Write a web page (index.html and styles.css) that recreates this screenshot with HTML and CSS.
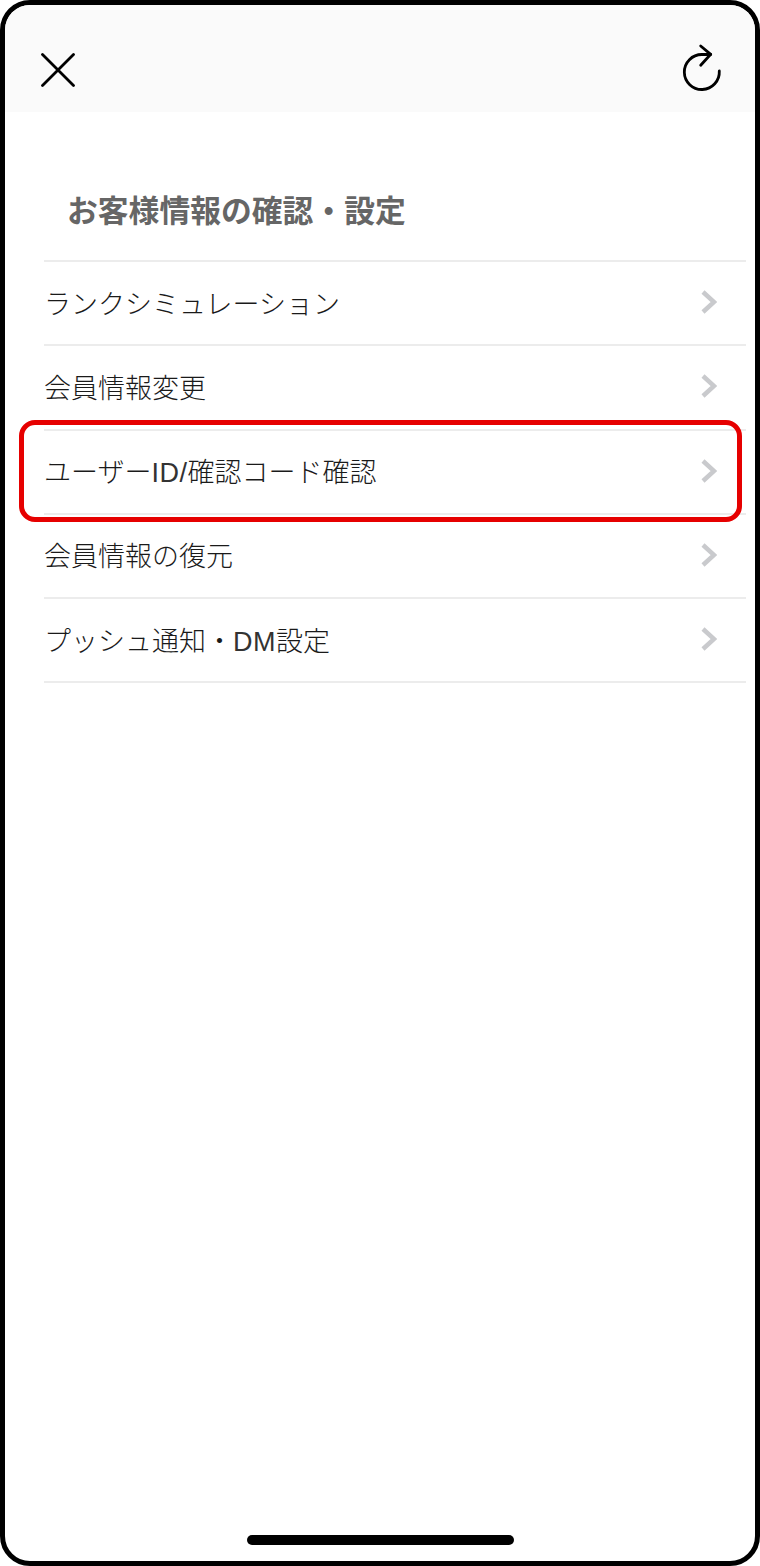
FILE: index.html
```html
<!DOCTYPE html>
<html lang="ja">
<head>
<meta charset="utf-8">
<title>お客様情報の確認・設定</title>
<link rel="stylesheet" href="styles.css">
</head>
<body>
<div class="phone">
  <header class="topbar">
    <svg class="icon-close" viewBox="0 0 34 34" width="34" height="34"><path d="M1.5 1.5 32.5 32.5M32.5 1.5 1.5 32.5"/></svg>
    <svg class="icon-reload" viewBox="0 0 40 50" width="40" height="50"><path d="M28.7 10.5H20A17.5 17.5 0 1 0 37.3 27"/><path d="M18.7 2 28.7 10.3 18.7 21.3"/></svg>
  </header>
  <main class="content">
    <h1 class="title">お客様情報の確認・設定</h1>
    <ul class="menu">
      <li class="row"><span>ランクシミュレーション</span><svg class="chev" viewBox="0 0 16 24" width="16" height="24"><path d="M2 2 13 12 2 22"/></svg></li>
      <li class="row"><span>会員情報変更</span><svg class="chev" viewBox="0 0 16 24" width="16" height="24"><path d="M2 2 13 12 2 22"/></svg></li>
      <li class="row"><span>ユーザー<span class="latin">ID/</span>確認コード確認</span><svg class="chev" viewBox="0 0 16 24" width="16" height="24"><path d="M2 2 13 12 2 22"/></svg></li>
      <li class="row"><span>会員情報の復元</span><svg class="chev" viewBox="0 0 16 24" width="16" height="24"><path d="M2 2 13 12 2 22"/></svg></li>
      <li class="row"><span>プッシュ通知・<span class="latin">DM</span>設定</span><svg class="chev" viewBox="0 0 16 24" width="16" height="24"><path d="M2 2 13 12 2 22"/></svg></li>
    </ul>
  </main>
  <div class="highlight"></div>
  <div class="home-bar"></div>
</div>
</body>
</html>
```
FILE: styles.css
```css
* { box-sizing: border-box; }
html, body { margin: 0; padding: 0; background: #fff; }
.phone {
  position: relative;
  width: 760px;
  height: 1566px;
  border: 5px solid #000;
  border-radius: 30px;
  overflow: hidden;
  background: #fff;
  font-family: "Liberation Sans", "Noto Sans CJK JP", sans-serif;
}
.topbar {
  height: 107px;
  background: #fafafa;
  display: flex;
  justify-content: space-between;
  align-items: flex-start;
  padding: 39px 33px 0 35.5px;
}
.icon-close path, .icon-reload path {
  fill: none;
  stroke: #000;
  stroke-width: 2.8;
  stroke-linecap: round;
  stroke-linejoin: round;
}
.icon-close { margin-top: 9px; }
.content { padding: 0 0 0 39px; }
.title {
  margin: 0;
  height: 148px;
  padding: 74.5px 0 0 23px;
  font-size: 30.8px;
  line-height: 50px;
  font-weight: 700;
  color: #666;
}
.menu {
  list-style: none;
  margin: 0;
  padding: 0;
  width: 702px;
  border-top: 2px solid #ececec;
}
.row {
  height: 84.25px;
  border-bottom: 2px solid #ececec;
  display: flex;
  justify-content: space-between;
  align-items: center;
  padding: 0 29px 2px 0;
  font-size: 27px;
  font-weight: 300;
  color: #1a1a1a;
}
.latin { letter-spacing: 0.5px; color: #333; }
.chev path {
  fill: none;
  stroke: #c9cacd;
  stroke-width: 4.5;
}
.highlight {
  position: absolute;
  left: 14px;
  top: 415px;
  width: 723px;
  height: 102px;
  border: 5px solid #e60000;
  border-radius: 16px;
}
.home-bar {
  position: absolute;
  left: 242.3px;
  top: 1530px;
  width: 266.7px;
  height: 10px;
  border-radius: 5px;
  background: #000;
}
```
